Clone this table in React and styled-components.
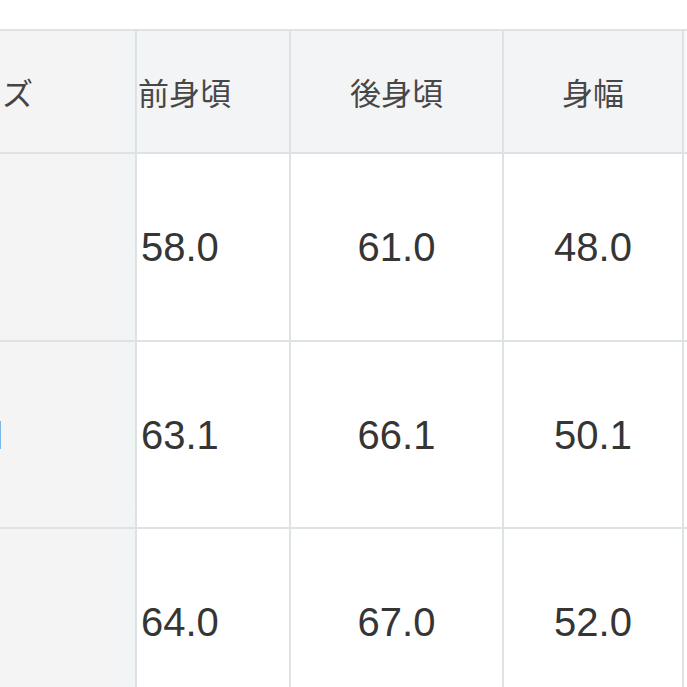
import React from "react";
import styled, { createGlobalStyle } from "styled-components";

const Global = createGlobalStyle`
  html, body { margin: 0; padding: 0; background: #ffffff; overflow: hidden; }
  #root { width: 687px; height: 687px; }
`;

const Page = styled.div`
  width: 687px;
  height: 687px;
  overflow: hidden;
  background: #ffffff;
  padding-top: 29px;
  box-sizing: border-box;
`;

const Table = styled.div`
  display: grid;
  grid-template-columns: 296px 152px 211px 178px 100px;
  grid-template-rows: 121px 186px 185px 186px;
  column-gap: 2px;
  row-gap: 2px;
  margin-left: -161px;
  width: max-content;
  background: #dde2e5;
  border-top: 2px solid #dde2e5;
`;

const Cell = styled.div`
  display: flex;
  align-items: center;
  justify-content: ${(p) => (p.$align === "left" ? "flex-start" : "center")};
  padding-left: ${(p) => p.$pad || 0}px;
  box-sizing: border-box;
  background: ${(p) => (p.$head ? "#f3f4f5" : "#ffffff")};
  color: ${(p) => (p.$head ? "#474747" : "#353535")};
  font-family: ${(p) =>
    p.$head
      ? `"Noto Sans CJK JP", "Noto Sans", sans-serif`
      : `"Liberation Sans", Arial, sans-serif`};
  font-size: ${(p) => (p.$head ? "31px" : "40px")};
  line-height: 1;
  white-space: nowrap;
`;

const HeaderCell = styled(Cell).attrs({ $head: true })``;

const EdgeCell = styled.div`
  background: ${(p) => (p.$head ? "#f7f9f9" : "#ffffff")};
`;

const SideCell = styled(Cell)`
  background: linear-gradient(to right, #f4f4f5 92%, #f1f4f5 100%);
  color: #444;
`;

const headers = ["サイズ", "前身頃", "後身頃", "身幅"];
const rows = [
  ["S", "58.0", "61.0", "48.0"],
  ["M", "63.1", "66.1", "50.1"],
  ["L", "64.0", "67.0", "52.0"],
];

export default function App() {
  return (
    <>
      <Global />
      <Page>
        <Table>
          {headers.map((h, i) =>
            i === 0 ? (
              <SideCell key={i} $head>
                {h}
              </SideCell>
            ) : (
              <HeaderCell key={i} $align={i === 1 ? "left" : "center"} $pad={i === 1 ? 1 : 0}>
                {h}
              </HeaderCell>
            )
          )}
          <EdgeCell $head />
          {rows.map((r, ri) => (
            <React.Fragment key={ri}>
              {r.map((v, ci) =>
                ci === 0 ? (
                  <SideCell key={ci}>{v}</SideCell>
                ) : (
                  <Cell key={ci} $align={ci === 1 ? "left" : "center"} $pad={ci === 1 ? 4 : 0}>
                    {v}
                  </Cell>
                )
              )}
              <EdgeCell />
            </React.Fragment>
          ))}
        </Table>
      </Page>
    </>
  );
}
